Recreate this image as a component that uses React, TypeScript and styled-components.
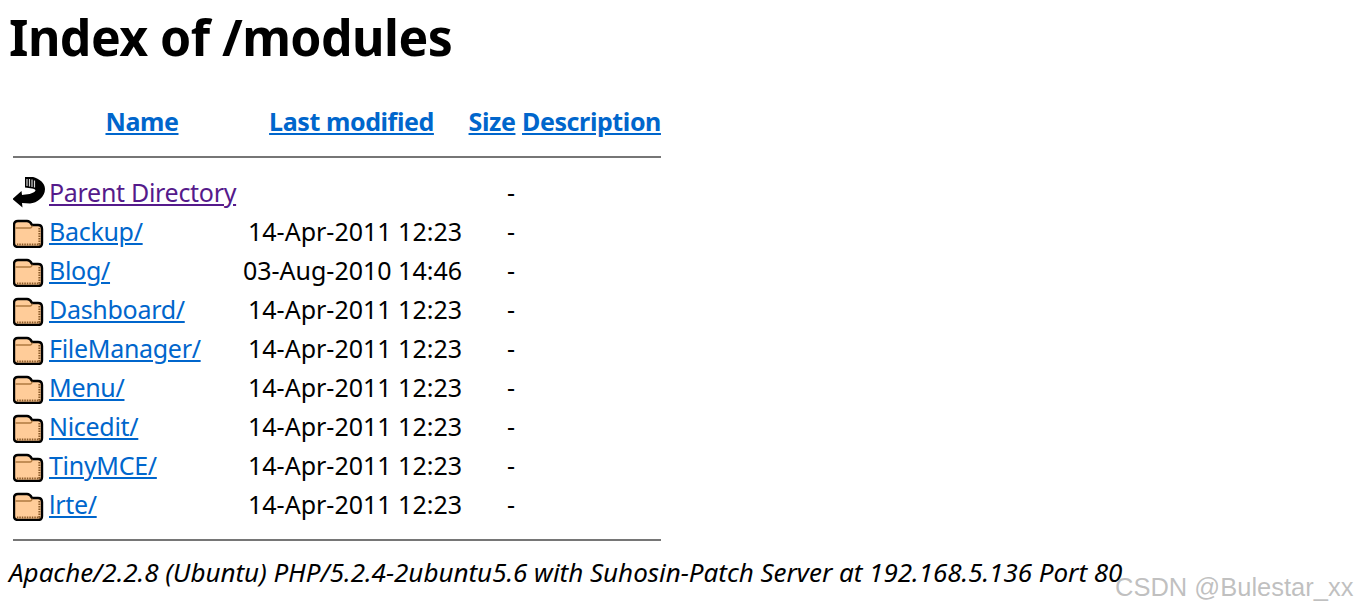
import styled, { createGlobalStyle } from "styled-components";

const GlobalStyle = createGlobalStyle`
  html, body {
    margin: 0;
    background: #fff;
  }
  body {
    font-family: "Noto Sans", "Open Sans", sans-serif;
    color: #000;
  }
`;

const Page = styled.div`
  height: 610px;
  padding: 0 0 0 9px;
  position: relative;
  overflow: hidden;
`;

const Title = styled.h1`
  margin: 0;
  padding-top: 7px;
  font-size: 50px;
  line-height: 60px;
  font-weight: 700;
  letter-spacing: -0.55px;
`;

const Listing = styled.table`
  margin: 18px 0 0 4px;
  width: 648px;
  table-layout: fixed;
  border-collapse: collapse;
`;

const HeaderCell = styled.th`
  padding: 0;
  height: 71px;
  vertical-align: middle;
  font-size: 25px;
  font-weight: 700;
  text-align: center;
  letter-spacing: -0.4px;
`;

const NameHeader = styled(HeaderCell)`
  padding-right: 6px;
`;

const Link = styled.a<{ $visited?: boolean }>`
  color: ${(p) => (p.$visited ? "#551a8b" : "#0066cc")};
  text-decoration: underline;
`;

const NameLink = styled(Link)`
  letter-spacing: -0.3px;
`;

const RuleCell = styled.td`
  padding: 0;
  height: 1px;
`;

const Rule = styled.div<{ $top?: number; $bottom?: number }>`
  height: 2px;
  background: #767676;
  margin: ${(p) => p.$top ?? 0}px 0 ${(p) => p.$bottom ?? 0}px;
`;

const Row = styled.tr`
  height: 39px;
`;

const Cell = styled.td<{ $align?: string; $pad?: number }>`
  padding: 0 ${(p) => p.$pad ?? 0}px 0 0;
  font-size: 25px;
  line-height: 39px;
  white-space: nowrap;
  text-align: ${(p) => p.$align ?? "left"};
`;

const IconCell = styled.td`
  padding: 0;
  line-height: 0;
  vertical-align: middle;
`;

const Footer = styled.address`
  margin-top: 14px;
  font-size: 26px;
  line-height: 34px;
  font-style: italic;
  letter-spacing: -0.02px;
  white-space: nowrap;
`;

const Watermark = styled.span`
  position: absolute;
  left: 1115px;
  top: 573px;
  font-family: "Liberation Sans", sans-serif;
  font-size: 25.5px;
  line-height: 28px;
  color: rgba(150, 150, 150, 0.6);
  white-space: nowrap;
`;

const FolderIcon = () => (
  <svg width="32" height="32" viewBox="4 1 32 32">
    <path
      d="M5 10 C5 7 6.5 6 9 6 H18 C21 6 22 8 23 10 H29 C32 10 33 11.5 33 14 V28 C33 31 31.5 32 29 32 H9 C6.5 32 5 31 5 28 Z"
      fill="#ffcc99"
      stroke="#000"
      strokeWidth="2.4"
    />
    <path d="M6.5 13 H21 C22.5 13 23 12 23 10.5" fill="none" stroke="#b07a40" strokeWidth="1.3" />
    <path d="M30.4 13 V29.4 H8" fill="none" stroke="#8a5a2a" strokeWidth="2" strokeDasharray="1.5 1" />
  </svg>
);

const BackIcon = () => (
  <svg width="32" height="32" viewBox="3 3 32 32">
    <path
      d="M15 3 L20 2.5 C27 3 35 8 35 15 C35 23 27 29 20 29.5 L12 29 L12.5 33.5 L2.5 25 L11.5 17 L12 21 C16 20.5 24 20 25.5 16.5 C25.5 14.5 20 14 15 13.5 Z"
      fill="#000"
    />
    <path d="M17 5 V12 M19.5 5 V12.5 M22 5.5 V13 M24.5 6.5 V13.5" stroke="#d8d8d8" strokeWidth="1.2" />
  </svg>
);

const rows = [
  ["Backup/", "14-Apr-2011 12:23"],
  ["Blog/", "03-Aug-2010 14:46"],
  ["Dashboard/", "14-Apr-2011 12:23"],
  ["FileManager/", "14-Apr-2011 12:23"],
  ["Menu/", "14-Apr-2011 12:23"],
  ["Nicedit/", "14-Apr-2011 12:23"],
  ["TinyMCE/", "14-Apr-2011 12:23"],
  ["lrte/", "14-Apr-2011 12:23"],
];

const App = () => {
  return (
    <Page>
      <GlobalStyle />
      <Title>Index of /modules</Title>
      <Listing>
        <colgroup>
          <col width="36" />
          <col width="192" />
          <col width="221" />
          <col width="60" />
          <col width="139" />
        </colgroup>
        <thead>
          <tr>
            <HeaderCell />
            <NameHeader>
              <Link href="#">Name</Link>
            </NameHeader>
            <HeaderCell>
              <Link href="#">Last modified</Link>
            </HeaderCell>
            <HeaderCell>
              <Link href="#">Size</Link>
            </HeaderCell>
            <HeaderCell>
              <Link href="#">Description</Link>
            </HeaderCell>
          </tr>
          <tr>
            <RuleCell colSpan={5}>
              <Rule $bottom={15} />
            </RuleCell>
          </tr>
        </thead>
        <tbody>
          <Row>
            <IconCell>
              <BackIcon />
            </IconCell>
            <Cell>
              <NameLink href="#" $visited>
                Parent Directory
              </NameLink>
            </Cell>
            <Cell />
            <Cell $align="right" $pad={7}>
              -
            </Cell>
            <Cell />
          </Row>
          {rows.map(([name, date]) => (
            <Row key={name}>
              <IconCell>
                <FolderIcon />
              </IconCell>
              <Cell>
                <NameLink href="#">{name}</NameLink>
              </Cell>
              <Cell $align="right">{date}</Cell>
              <Cell $align="right" $pad={7}>
                -
              </Cell>
              <Cell />
            </Row>
          ))}
          <tr>
            <RuleCell colSpan={5}>
              <Rule $top={15} />
            </RuleCell>
          </tr>
        </tbody>
      </Listing>
      <Footer>
        Apache/2.2.8 (Ubuntu) PHP/5.2.4-2ubuntu5.6 with Suhosin-Patch Server at 192.168.5.136 Port 80
      </Footer>
      <Watermark>CSDN @Bulestar_xx</Watermark>
    </Page>
  );
};

export default App;
